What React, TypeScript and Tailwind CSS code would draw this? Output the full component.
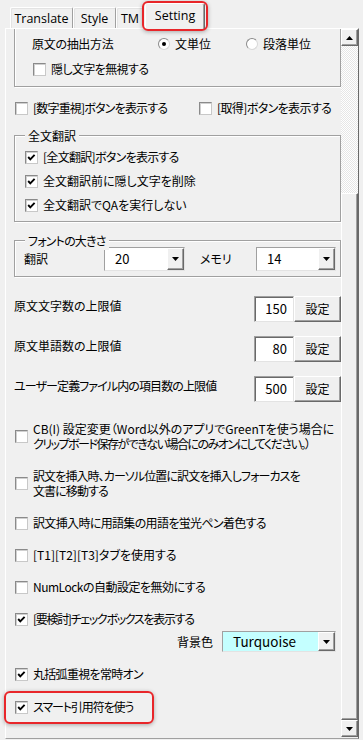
import React from "react";

const raised =
  "bg-[#f0f0f0] border border-t-white border-l-white border-b-[#696969] border-r-[#696969] shadow-[inset_-1px_-1px_0_#a0a0a0]";
const sunken =
  "bg-white border border-t-[#a0a0a0] border-l-[#a0a0a0] border-b-[#e3e3e3] border-r-[#e3e3e3] shadow-[inset_1px_1px_0_#696969]";
const etched =
  "border border-[#a0a0a0] shadow-[1px_1px_0_#ffffff,inset_1px_1px_0_#ffffff]";

function Tri({ up }: { up?: boolean }) {
  return (
    <svg width="7" height="4" viewBox="0 0 7 4">
      <path d={up ? "M3.5 0 L7 4 L0 4 Z" : "M0 0 L7 0 L3.5 4 Z"} fill="#000" />
    </svg>
  );
}

function Check({ checked }: { checked?: boolean }) {
  return (
    <span className="flex w-[13px] h-[13px] shrink-0 items-center justify-center bg-white border border-t-[#8a8a8a] border-l-[#8a8a8a] border-b-[#c8c8c8] border-r-[#c8c8c8] shadow-[inset_1px_1px_0_#d0d0d0]">
      {checked && (
        <svg width="11" height="11" viewBox="0 0 11 11">
          <polyline points="2.2,5 4.3,7.3 8.6,2.8" fill="none" stroke="#000" strokeWidth="1.9" />
        </svg>
      )}
    </span>
  );
}

function Radio({ checked }: { checked?: boolean }) {
  return (
    <span className="flex w-[12px] h-[12px] shrink-0 items-center justify-center rounded-full bg-white border border-t-[#8a8a8a] border-l-[#8a8a8a] border-b-[#d8d8d8] border-r-[#d8d8d8]">
      {checked && <span className="block w-[4px] h-[4px] rounded-full bg-black" />}
    </span>
  );
}

function CheckRow({
  checked,
  children,
  className = "",
  t = "",
}: {
  checked?: boolean;
  children: React.ReactNode;
  className?: string;
  t?: string;
}) {
  return (
    <div className={`flex items-center h-[18px] ${className}`}>
      <Check checked={checked} />
      <span className={`ml-[5px] leading-[18px] whitespace-nowrap ${t}`}>{children}</span>
    </div>
  );
}

function Combo({
  w,
  h,
  value,
  bg = "bg-white",
  text = "text-[13px]",
}: {
  w: string;
  h: string;
  value: string;
  bg?: string;
  text?: string;
}) {
  return (
    <div className={`flex ${w} ${h} ${sunken}`}>
      <div className={`flex-1 flex items-center pl-[10px] ${text} ${bg}`}>{value}</div>
      <div className={`w-[17px] flex items-center justify-center ${raised}`}>
        <Tri />
      </div>
    </div>
  );
}

function LimitRow({
  label,
  value,
  className = "",
  t = "",
}: {
  label: string;
  value: string;
  className?: string;
  t?: string;
}) {
  return (
    <div className={`flex h-[26px] ${className}`}>
      <div className={`flex-1 pt-[1px] leading-[18px] whitespace-nowrap ${t}`}>{label}</div>
      <div className={`w-[40px] h-[26px] ${sunken} text-right pr-[6px] leading-[23px] text-[13px]`}>{value}</div>
      <div className={`w-[47px] h-[26px] ${raised} flex items-center justify-center`}>設定</div>
    </div>
  );
}

function Tab({ children, w, selected }: { children: React.ReactNode; w: string; selected?: boolean }) {
  if (selected) {
    return (
      <div
        className={`relative z-10 ${w} h-[26px] -mb-[1px] ml-[1px] bg-[#f0f0f0] border-t border-l border-r border-t-white border-l-white border-r-[#696969] rounded-t-[2px] shadow-[inset_-1px_0_0_#a0a0a0] flex justify-center pt-[3px] leading-[18px] font-['Open_Sans',sans-serif] text-[12.5px]`}
      >
        {children}
      </div>
    );
  }
  return (
    <div
      className={`${w} h-[21px] bg-[#f0f0f0] border-t border-l border-r border-t-white border-l-white border-r-[#a0a0a0] rounded-t-[2px] shadow-[inset_1px_1px_0_#e3e3e3] flex justify-center pt-[2px] leading-[18px] font-['Open_Sans',sans-serif] text-[12.5px]`}
    >
      {children}
    </div>
  );
}

export default function App() {
  return (
    <div className="relative w-[363px] h-[740px] overflow-hidden bg-[#f0f0f0] text-black text-[12px] font-['Noto_Sans_CJK_JP',sans-serif] [font-feature-settings:'palt']">
      {/* tab strip */}
      <div className="flex h-[28px] items-end pl-[10px]">
        <Tab w="w-[63px]">Translate</Tab>
        <Tab w="w-[43px]">Style</Tab>
        <Tab w="w-[28px]">TM</Tab>
        <Tab w="w-[60px]" selected>
          Setting
        </Tab>
      </div>

      {/* panel */}
      <div className="flex h-[711px] ml-[5px] mr-[4px] border border-t-white border-l-white border-r-[#696969] border-b-[#a0a0a0]">
        {/* content */}
        <div className="flex-1 overflow-hidden pl-[8px]">
          {/* group 1 (top cut off by scroll) */}
          <div className="h-[58px] border-l border-r border-b border-[#a0a0a0] shadow-[1px_1px_0_#ffffff,inset_1px_0_0_#ffffff] pt-[6px]">
            <div className="flex items-center h-[18px] pl-[17px]">
              <span className="w-[126px] whitespace-nowrap tracking-[-0.3px]">原文の抽出方法</span>
              <Radio checked />
              <span className="ml-[5px] w-[71px]">文単位</span>
              <Radio />
              <span className="ml-[5px]">段落単位</span>
            </div>
            <CheckRow className="mt-[7px] pl-[18px]" t="tracking-[-0.6px]">
              隠し文字を無視する
            </CheckRow>
          </div>

          <div className="flex items-center h-[18px] mt-[12px] pl-[1px]">
            <div className="w-[184px]">
              <CheckRow t="tracking-[-0.8px]">[数字重視]ボタンを表示する</CheckRow>
            </div>
            <CheckRow t="tracking-[-0.6px]">[取得]ボタンを表示する</CheckRow>
          </div>

          {/* 全文翻訳 */}
          <div className={`relative mt-[18px] ${etched} pt-[12px] pb-[7px] pl-[10px]`}>
            <span className="absolute left-[10px] -top-[9px] px-[3px] bg-[#f0f0f0] leading-[18px]">全文翻訳</span>
            <CheckRow checked t="tracking-[-0.7px]">
              [全文翻訳]ボタンを表示する
            </CheckRow>
            <CheckRow checked className="mt-[6px]">
              全文翻訳前に隠し文字を削除
            </CheckRow>
            <CheckRow checked className="mt-[6px]">
              全文翻訳でQAを実行しない
            </CheckRow>
          </div>

          {/* フォントの大きさ */}
          <div className={`relative mt-[18px] ${etched} pt-[6px] pb-[5px] pl-[9px]`}>
            <span className="absolute left-[10px] -top-[9px] px-[3px] bg-[#f0f0f0] leading-[18px] tracking-[-0.8px]">
              フォントの大きさ
            </span>
            <div className="flex items-center h-[24px]">
              <span className="w-[80px]">翻訳</span>
              <Combo w="w-[81px]" h="h-[24px]" value="20" />
              <span className="ml-[15px] w-[56px]">メモリ</span>
              <Combo w="w-[80px]" h="h-[24px]" value="14" />
            </div>
          </div>

          <LimitRow className="mt-[19px]" label="原文文字数の上限値" value="150" />
          <LimitRow className="mt-[14px]" label="原文単語数の上限値" value="80" />
          <LimitRow
            className="mt-[14px]"
            label="ユーザー定義ファイル内の項目数の上限値"
            value="500"
            t="tracking-[-0.9px]"
          />

          <div className="flex items-center mt-[19px] pl-[1px]">
            <Check />
            <div className="ml-[5px] leading-[15px] whitespace-nowrap">
              <div>CB(I) 設定変更（Word以外のアプリでGreenTを使う場合に</div>
              <div className="tracking-[-1.5px]">クリップボード保存ができない場合にのみオンにしてください。）</div>
            </div>
          </div>

          <div className="flex items-center mt-[17px] pl-[1px]">
            <Check />
            <div className="ml-[5px] leading-[15px] whitespace-nowrap tracking-[-0.9px]">
              <div>訳文を挿入時、カーソル位置に訳文を挿入しフォーカスを</div>
              <div>文書に移動する</div>
            </div>
          </div>

          <CheckRow className="mt-[16px] pl-[1px]" t="tracking-[-0.65px]">
            訳文挿入時に用語集の用語を蛍光ペン着色する
          </CheckRow>
          <CheckRow className="mt-[14px] pl-[1px]">[T1][T2][T3]タブを使用する</CheckRow>
          <CheckRow className="mt-[14px] pl-[1px]" t="tracking-[-0.5px]">
            NumLockの自動設定を無効にする
          </CheckRow>
          <CheckRow checked className="mt-[14px] pl-[1px]" t="tracking-[-1.3px]">
            [要検討]チェックボックスを表示する
          </CheckRow>

          <div className="flex items-center justify-end h-[21px] mt-[3px] pr-[5px]">
            <span className="mr-[9px]">背景色</span>
            <Combo w="w-[114px]" h="h-[21px]" value="Turquoise" bg="bg-[#c4ffff]" text="text-[13.5px]" />
          </div>

          <CheckRow checked className="mt-[13px] pl-[1px]" t="tracking-[-0.7px]">
            丸括弧重視を常時オン
          </CheckRow>
          <CheckRow checked className="mt-[15px] pl-[1px]" t="tracking-[-1.1px]">
            スマート引用符を使う
          </CheckRow>
        </div>

        {/* scrollbar */}
        <div className="w-[17px] flex flex-col">
          <div className={`h-[17px] ${raised} flex items-center justify-center`}>
            <Tri up />
          </div>
          <div className="h-[147px] bg-[image:repeating-conic-gradient(#e6e6e6_0_25%,#ffffff_0_50%)] [background-size:2px_2px]" />
          <div className={`h-[527px] ${raised}`} />
          <div className={`h-[17px] ${raised} flex items-center justify-center`}>
            <Tri />
          </div>
        </div>
      </div>

      {/* red highlights */}
      <div className="absolute left-[142px] top-[1px] w-[66px] h-[30px] border-2 border-[#e8262a] rounded-[6px] shadow-[0_1px_4px_rgba(0,0,0,0.3)] z-20" />
      <div className="absolute left-[4px] top-[691px] w-[150px] h-[33px] border-2 border-[#e8262a] rounded-[6px] shadow-[0_1px_4px_rgba(0,0,0,0.3)]" />
    </div>
  );
}
